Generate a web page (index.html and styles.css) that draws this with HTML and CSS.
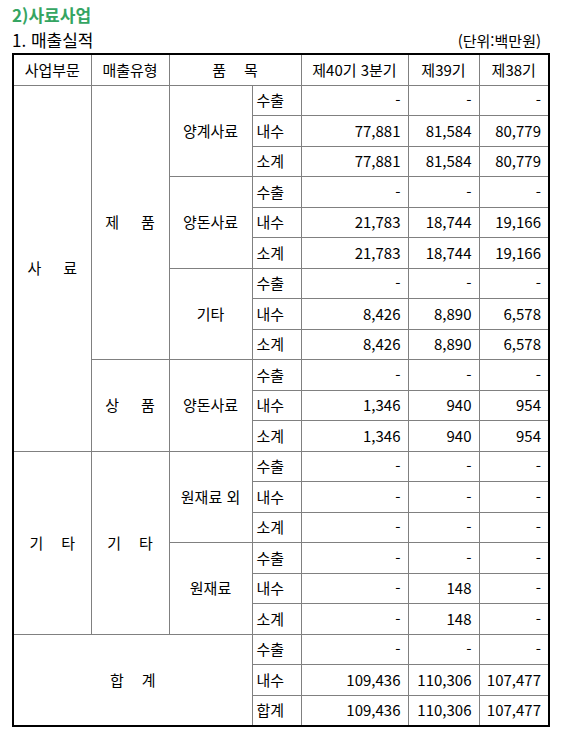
FILE: index.html
```html
<!DOCTYPE html>
<html lang="ko">
<head>
<meta charset="utf-8">
<link rel="stylesheet" href="styles.css">
</head>
<body>
<div class="page">
  <h2 class="title">2)사료사업</h2>
  <div class="subhead">
    <span class="subtitle">1. 매출실적</span>
    <span class="unit">(단위:백만원)</span>
  </div>
  <table class="sales">
    <colgroup>
      <col class="c1"><col class="c2"><col class="c3"><col class="c4"><col class="c5"><col class="c6"><col class="c7">
    </colgroup>
    <thead>
      <tr>
        <th>사업부문</th>
        <th>매출유형</th>
        <th colspan="2"><span class="sp">품</span><span>목</span></th>
        <th>제40기 3분기</th>
        <th>제39기</th>
        <th>제38기</th>
      </tr>
    </thead>
    <tbody>
      <tr>
        <td rowspan="12" class="ctr"><span class="sp wide">사</span><span>료</span></td>
        <td rowspan="9" class="ctr"><span class="sp wide">제</span><span>품</span></td>
        <td rowspan="3" class="ctr">양계사료</td>
        <td class="lbl">수출</td><td class="num">-</td><td class="num">-</td><td class="num">-</td>
      </tr>
      <tr><td class="lbl">내수</td><td class="num">77,881</td><td class="num">81,584</td><td class="num">80,779</td></tr>
      <tr><td class="lbl">소계</td><td class="num">77,881</td><td class="num">81,584</td><td class="num">80,779</td></tr>
      <tr>
        <td rowspan="3" class="ctr">양돈사료</td>
        <td class="lbl">수출</td><td class="num">-</td><td class="num">-</td><td class="num">-</td>
      </tr>
      <tr><td class="lbl">내수</td><td class="num">21,783</td><td class="num">18,744</td><td class="num">19,166</td></tr>
      <tr><td class="lbl">소계</td><td class="num">21,783</td><td class="num">18,744</td><td class="num">19,166</td></tr>
      <tr>
        <td rowspan="3" class="ctr">기타</td>
        <td class="lbl">수출</td><td class="num">-</td><td class="num">-</td><td class="num">-</td>
      </tr>
      <tr><td class="lbl">내수</td><td class="num">8,426</td><td class="num">8,890</td><td class="num">6,578</td></tr>
      <tr><td class="lbl">소계</td><td class="num">8,426</td><td class="num">8,890</td><td class="num">6,578</td></tr>
      <tr>
        <td rowspan="3" class="ctr"><span class="sp wide">상</span><span>품</span></td>
        <td rowspan="3" class="ctr">양돈사료</td>
        <td class="lbl">수출</td><td class="num">-</td><td class="num">-</td><td class="num">-</td>
      </tr>
      <tr><td class="lbl">내수</td><td class="num">1,346</td><td class="num">940</td><td class="num">954</td></tr>
      <tr><td class="lbl">소계</td><td class="num">1,346</td><td class="num">940</td><td class="num">954</td></tr>
      <tr>
        <td rowspan="6" class="ctr"><span class="sp">기</span><span>타</span></td>
        <td rowspan="6" class="ctr"><span class="sp">기</span><span>타</span></td>
        <td rowspan="3" class="ctr">원재료 외</td>
        <td class="lbl">수출</td><td class="num">-</td><td class="num">-</td><td class="num">-</td>
      </tr>
      <tr><td class="lbl">내수</td><td class="num">-</td><td class="num">-</td><td class="num">-</td></tr>
      <tr><td class="lbl">소계</td><td class="num">-</td><td class="num">-</td><td class="num">-</td></tr>
      <tr>
        <td rowspan="3" class="ctr">원재료</td>
        <td class="lbl">수출</td><td class="num">-</td><td class="num">-</td><td class="num">-</td>
      </tr>
      <tr><td class="lbl">내수</td><td class="num">-</td><td class="num">148</td><td class="num">-</td></tr>
      <tr><td class="lbl">소계</td><td class="num">-</td><td class="num">148</td><td class="num">-</td></tr>
      <tr>
        <td rowspan="3" colspan="3" class="ctr"><span class="sp">합</span><span>계</span></td>
        <td class="lbl">수출</td><td class="num">-</td><td class="num">-</td><td class="num">-</td>
      </tr>
      <tr><td class="lbl">내수</td><td class="num">109,436</td><td class="num">110,306</td><td class="num">107,477</td></tr>
      <tr><td class="lbl">합계</td><td class="num">109,436</td><td class="num">110,306</td><td class="num">107,477</td></tr>
    </tbody>
  </table>
</div>
</body>
</html>
```

FILE: styles.css
```css
html, body {
  margin: 0;
  padding: 0;
  background: #ffffff;
}

body {
  font-family: "Noto Sans CJK KR", "Noto Sans", sans-serif;
  color: #000000;
}

.page {
  padding: 2px 14px 0 12px;
}

.title {
  margin: 0;
  font-size: 17px;
  line-height: 25px;
  font-weight: bold;
  color: #35a562;
}

.subhead {
  display: flex;
  justify-content: space-between;
  align-items: baseline;
  line-height: 25px;
}

.subtitle {
  font-size: 17px;
}

.unit {
  font-size: 15px;
  padding-right: 7px;
}

.sales {
  margin-top: 0;
  border-collapse: collapse;
  width: 536px;
  table-layout: fixed;
  border: 2px solid #000000;
  font-size: 15px;
}

.c1 { width: 78px; }
.c2 { width: 78px; }
.c3 { width: 83px; }
.c4 { width: 49px; }
.c5 { width: 107px; }
.c6 { width: 71px; }
.c7 { width: 70px; }

.sales th,
.sales td {
  border: 1px solid #808080;
  padding: 0;
  height: 29.5px;
  line-height: 18px;
  font-weight: normal;
  white-space: nowrap;
}

.sales th {
  text-align: center;
}

.ctr {
  text-align: center;
  vertical-align: middle;
}

.lbl {
  text-align: left;
  padding-left: 4px !important;
}

.num {
  text-align: right;
  padding-right: 7px !important;
}

.sp {
  margin-right: 18px;
}

.sp.wide {
  margin-right: 22px;
}
```
